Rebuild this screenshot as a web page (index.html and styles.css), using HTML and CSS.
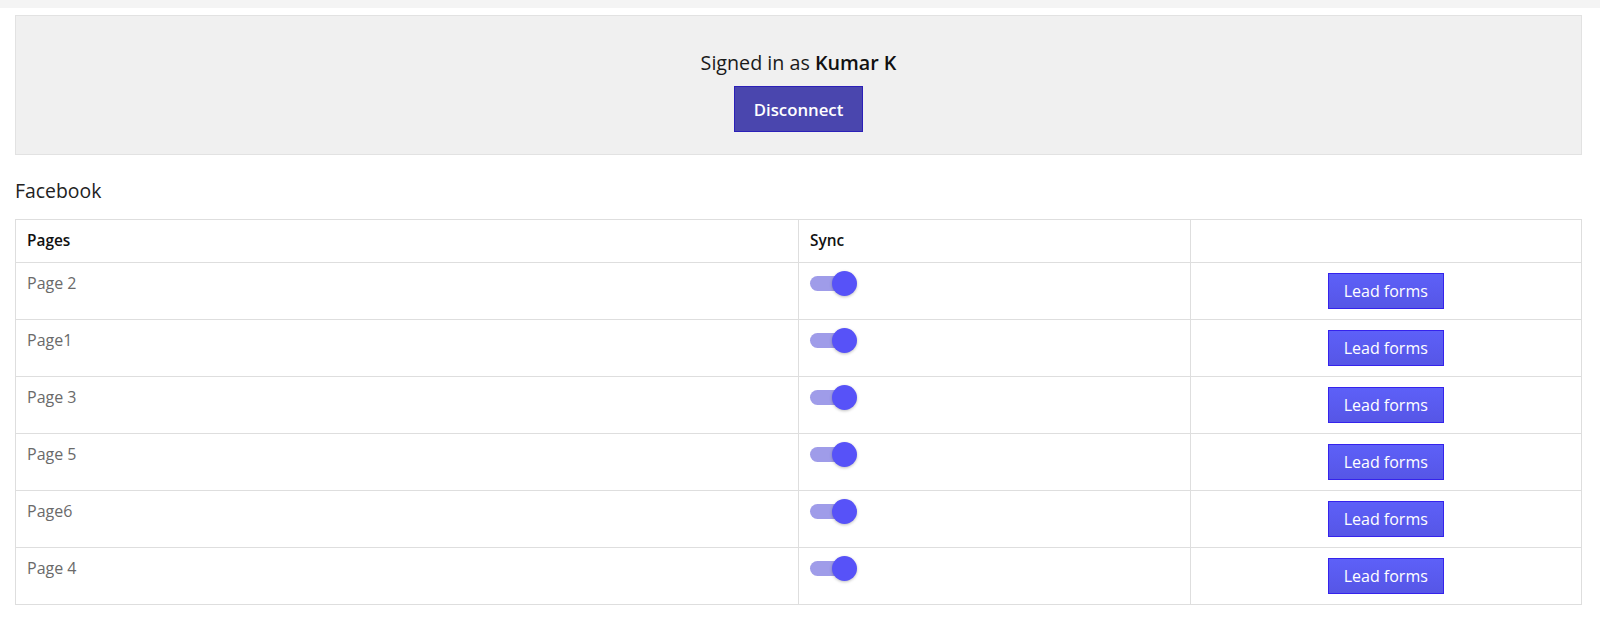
FILE: index.html
```html
<!DOCTYPE html>
<html>
<head>
<meta charset="utf-8">
<link rel="stylesheet" href="styles.css">
</head>
<body>
<div class="topbar"></div>
<div class="wrap">
  <div class="panel">
    <div class="signed">Signed in as <b>Kumar K</b></div>
    <button class="disconnect">Disconnect</button>
  </div>
  <div class="section-title">Facebook</div>
  <table class="pages">
    <thead>
      <tr><th class="c1">Pages</th><th class="c2">Sync</th><th class="c3"></th></tr>
    </thead>
    <tbody>
      <tr><td>Page 2</td><td><span class="toggle"><span class="knob"></span></span></td><td class="act"><button class="lead">Lead forms</button></td></tr>
      <tr><td>Page1</td><td><span class="toggle"><span class="knob"></span></span></td><td class="act"><button class="lead">Lead forms</button></td></tr>
      <tr><td>Page 3</td><td><span class="toggle"><span class="knob"></span></span></td><td class="act"><button class="lead">Lead forms</button></td></tr>
      <tr><td>Page 5</td><td><span class="toggle"><span class="knob"></span></span></td><td class="act"><button class="lead">Lead forms</button></td></tr>
      <tr><td>Page6</td><td><span class="toggle"><span class="knob"></span></span></td><td class="act"><button class="lead">Lead forms</button></td></tr>
      <tr><td>Page 4</td><td><span class="toggle"><span class="knob"></span></span></td><td class="act"><button class="lead">Lead forms</button></td></tr>
    </tbody>
  </table>
</div>
</body>
</html>
```
FILE: styles.css
```css
html, body {
  margin: 0;
  padding: 0;
  background: #ffffff;
  font-family: "Open Sans", "Liberation Sans", sans-serif;
  color: #222;
}
.topbar {
  height: 8px;
  background: #f4f4f4;
}
.wrap {
  padding: 7px 18px 0 15px;
}
.panel {
  background: #f0f0f0;
  border: 1px solid #e2e2e2;
  padding: 33px 0 22px;
  text-align: center;
}
.signed {
  font-size: 19.7px;
  line-height: 27px;
  color: #1a1a1a;
}
.signed b {
  font-weight: 600;
  color: #111;
}
.disconnect {
  display: block;
  margin: 10px auto 0;
  height: 46px;
  width: 129px;
  background: #4a46ae;
  border: 1px solid #2b20b8;
  color: #fff;
  font-family: "Open Sans", "Liberation Sans", sans-serif;
  font-size: 16.8px;
  font-weight: 600;
  padding: 0;
  cursor: pointer;
}
.section-title {
  font-size: 19.4px;
  line-height: 26px;
  margin: 23px 0 15px;
  color: #222;
}
.pages {
  width: 100%;
  border-collapse: collapse;
  table-layout: fixed;
  font-size: 16px;
}
.pages th, .pages td {
  border: 1px solid #dedede;
  text-align: left;
  vertical-align: top;
  padding: 10px 11px;
  line-height: 21px;
}
.pages th {
  box-sizing: border-box;
  font-weight: 600;
  color: #111;
  font-size: 15.4px;
  line-height: 22px;
}
.pages .c1 { width: 50%; }
.pages .c2 { width: 25%; }
.pages .c3 { width: 25%; }
.pages td {
  color: #6a6a6a;
  height: 36px;
}
.pages td.act {
  text-align: center;
}
.toggle {
  position: relative;
  display: inline-block;
  width: 40px;
  height: 15px;
  margin-top: 3px;
  border-radius: 8px;
  background: #9f9ce9;
}
.knob {
  position: absolute;
  right: -7px;
  top: -5px;
  width: 25px;
  height: 25px;
  border-radius: 50%;
  background: #5752f8;
  box-shadow: 0 1px 3px rgba(0,0,0,0.25);
}
.lead {
  width: 116px;
  height: 36px;
  background: linear-gradient(#5d60f8, #5656e6);
  border: 1px solid #3523ec;
  color: #fff;
  font-family: "Open Sans", "Liberation Sans", sans-serif;
  font-size: 16px;
  padding: 0;
  cursor: pointer;
}
```
